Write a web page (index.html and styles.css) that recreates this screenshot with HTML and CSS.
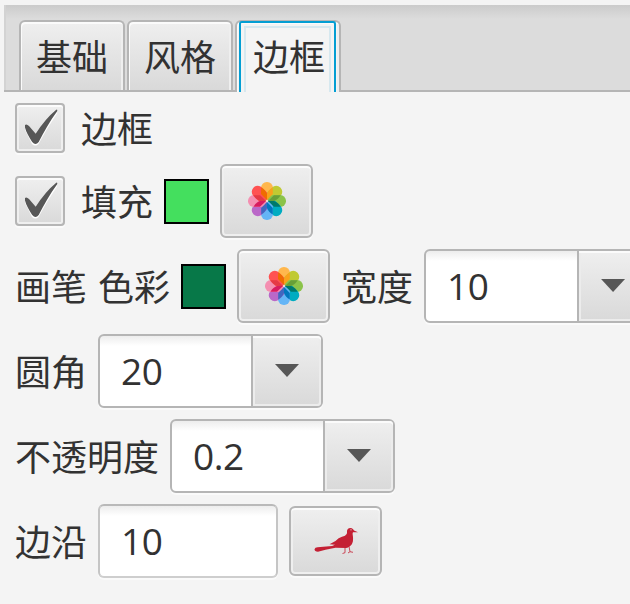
FILE: index.html
```
<!DOCTYPE html>
<html lang="zh-CN">
<head>
<meta charset="utf-8">
<title>边框</title>
<link rel="stylesheet" href="styles.css">
</head>
<body>
<svg class="defs" width="0" height="0">
  <symbol id="check" viewBox="0 0 50 50">
    <path d="M10 24 12.500 23.500 20.700 32.500 32 17 42 8.500V10.500L32 26 23.500 41Q20.500 44 17 41L10 27Z" fill="#fff"/>
    <path d="M10 22Q11.500 20.500 14 23L20.700 30.800Q30 16 41.500 6.500 43 6.500 42 8.500C35 18 29 29 23.700 39Q20.500 43 17.200 39C14 34 11 29 10 24.500Z" fill="#575757"/>
  </symbol>
  <symbol id="flower" viewBox="-20 -20 40 40">
    <g class="petals">
      <rect x="-6" y="-19" width="12" height="18.500" rx="5.800" fill="#ffb74d"/>
      <rect x="-6" y="-19" width="12" height="18.500" rx="5.800" fill="#c0ca33" transform="rotate(45)"/>
      <rect x="-6" y="-19" width="12" height="18.500" rx="5.800" fill="#8bc34a" transform="rotate(90)"/>
      <rect x="-6" y="-19" width="12" height="18.500" rx="5.800" fill="#00acc1" transform="rotate(135)"/>
      <rect x="-6" y="-19" width="12" height="18.500" rx="5.800" fill="#64b5f6" transform="rotate(180)"/>
      <rect x="-6" y="-19" width="12" height="18.500" rx="5.800" fill="#ba68c8" transform="rotate(225)"/>
      <rect x="-6" y="-19" width="12" height="18.500" rx="5.800" fill="#f48fb1" transform="rotate(270)"/>
      <rect x="-6" y="-19" width="12" height="18.500" rx="5.800" fill="#ff5252" transform="rotate(315)"/>
    </g>
    <path d="M0-1-6-7-5.800-13.500C-3-12-1-10 0-7Z" fill="#ef6c00"/>
    <path d="M0-1V-7C1-10 3-12 5.800-13.500V-7Z" fill="#f9a01b"/>
    <path d="M1 0 7-5.800H13.500C12-3 10-1 7 0Z" fill="#689f38"/>
    <path d="M1 0H7C10 1 12 3 13.500 5.800H7Z" fill="#00796b"/>
    <path d="M0 1 5.800 7V13.500C3 12 1 10 0 7Z" fill="#0277bd"/>
    <path d="M0 1V7C-1 10-3 12-5.800 13.500V7Z" fill="#3f68c0"/>
    <path d="M-1 0-7 5.800H-13.500C-12 3-10 1-7 0Z" fill="#d81b60"/>
    <path d="M-1 0H-7C-10-1-12-3-13.500-5.800H-7Z" fill="#e53945"/>
    <circle r="1.200" fill="#e8ddd8"/>
  </symbol>
</svg>

<nav class="tabs">
  <div class="tab">基础</div>
  <div class="tab">风格</div>
  <div class="tab active"><span class="focus">边框</span></div>
</nav>

<main class="form">
  <div class="row toggle">
    <div class="checkbox"><svg width="50" height="50"><use href="#check"/></svg></div>
    <span class="label">边框</span>
  </div>
  <div class="row">
    <div class="row toggle">
      <div class="checkbox"><svg width="50" height="50"><use href="#check"/></svg></div>
      <span class="label">填充</span>
    </div>
    <div class="swatch lime"></div>
    <div class="button"><svg width="40" height="40"><use href="#flower"/></svg></div>
  </div>
  <div class="row">
    <span class="label">画笔</span>
    <span class="label">色彩</span>
    <div class="swatch green"></div>
    <div class="button"><svg width="40" height="40"><use href="#flower"/></svg></div>
    <span class="label">宽度</span>
    <div class="combo"><span class="value">10</span><div class="arrow"><i></i></div></div>
  </div>
  <div class="row">
    <span class="label">圆角</span>
    <div class="combo"><span class="value">20</span><div class="arrow"><i></i></div></div>
  </div>
  <div class="row">
    <span class="label">不透明度</span>
    <div class="combo"><span class="value">0.2</span><div class="arrow"><i></i></div></div>
  </div>
  <div class="row">
    <span class="label">边沿</span>
    <div class="input"><span class="value">10</span></div>
    <div class="button short">
      <svg class="bird" width="46" height="30" viewBox="0 0 46 30">
        <path d="M1.500 23.300Q2 21.300 4.500 21.300L19 20 22 18.800 16.500 18.300 22.500 15Q25.500 11.500 29 10.700C31 10.500 34 9 34 6.500C33.500 4 35 2 37.500 2C39.500 2 40.500 3.500 41 4.500L45 6.300 40 6.300C39 8 40.500 10 40 14C40 18 37 21.500 33 22L22.500 21.700 12.500 23.700 5 25.700Q1.500 25.700 1.500 23.300Z" fill="#c42034"/>
        <path d="M32 21.500V26.700L29.500 27.500M36 20.500 37 25.700 35 27M37 25.700 40 26.300" fill="none" stroke="#c42034" stroke-width=".8"/>
        <circle cx="38" cy="3.800" r=".6" fill="#eee"/>
      </svg>
    </div>
  </div>
</main>
</body>
</html>
```

FILE: styles.css
```
* { box-sizing: border-box; }

body {
  margin: 0;
  height: 604px;
  padding: 5px 0 0 4px;
  overflow: hidden;
  background: #f4f4f4;
  color: #323232;
  font: 36px/50px "Noto Sans CJK SC", sans-serif;
}

svg { display: block; flex: none; }
.defs { position: absolute; }

.tabs {
  display: flex;
  gap: 2px;
  height: 87px;
  padding: 15px 0 0 15px;
  background: linear-gradient(#cbcbcb, #dcdcdc 14px);
  box-shadow: inset 0 -2px #b5b5b5, inset 2px 0 #d3d3d3;
}

.tab {
  width: 106px;
  height: 70px;
  padding: 8px 0 0 15px;
  border: 2px solid #b5b5b5;
  border-bottom: 0;
  border-radius: 6px 6px 0 0;
  background: linear-gradient(#efefef, #d9d9d9);
  box-shadow: inset 1px 2px #fbfbfb, inset -2px 0 #efefef;
  white-space: nowrap;
}

.tab.active {
  height: 72px;
  padding: 0 2px;
  background: #f4f4f4;
}

.focus {
  display: block;
  width: 97px;
  height: 71px;
  margin-top: -1px;
  padding: 7px 0 0 12px;
  border: 2px solid #039ed3;
  border-bottom: 0;
  border-radius: 3px 3px 0 0;
  background:
    linear-gradient(#d6e8ef, #d6e8ef) 3px 3px / 87px 2px no-repeat,
    linear-gradient(#d6e8ef, #d6e8ef) 3px 3px / 2px 100% no-repeat,
    linear-gradient(#d6e8ef, #d6e8ef) 88px 3px / 2px 100% no-repeat;
}

.form {
  display: flex;
  flex-direction: column;
  gap: 11px;
  padding: 11px 0 0 11px;
}

.row {
  display: flex;
  align-items: center;
  flex: none;
  gap: 11px;
}

.row.toggle { gap: 16px; }

.label {
  flex: none;
  position: relative;
  top: -1px;
  white-space: nowrap;
}

.checkbox, .button, .combo, .input {
  flex: none;
  border: 2px solid #b5b5b5;
  border-radius: 6px;
  box-shadow: 0 2px #fafafa;
}

.checkbox, .button {
  display: flex;
  align-items: center;
  justify-content: center;
  background: linear-gradient(#efefef, #d9d9d9);
  box-shadow: inset 0 2px #fcfcfc, inset 0 0 0 2px #efefef, 0 2px #fafafa;
}

.checkbox { width: 50px; height: 50px; border-radius: 4px; }
.button { width: 93px; height: 74px; padding: 0 0 1px; }
.button.short { height: 70px; }

.swatch {
  flex: none;
  width: 45px;
  height: 45px;
  border: 2px solid #000;
}

.lime { background: #44df5e; }
.green { background: #077848; }

.combo, .input {
  display: flex;
  height: 74px;
  background: linear-gradient(#ededed, #fff 10px);
}

.combo { width: 225px; }
.input { width: 180px; border-color: #b9b9b9 #c5c5c5 #cecece; }

.value {
  flex: 1;
  padding-left: 21px;
  font: 37px/70px "Open Sans", sans-serif;
  letter-spacing: -0.4px;
}

.arrow {
  display: flex;
  align-items: center;
  justify-content: center;
  width: 70px;
  border-left: 2px solid #b5b5b5;
  border-radius: 0 4px 4px 0;
  background: linear-gradient(#efefef, #d9d9d9);
  box-shadow: inset 0 2px #fbfbfb, inset 0 0 0 2px #ececec;
}

.arrow i {
  width: 24px;
  height: 13px;
  margin-top: -1px;
  background: #575757;
  clip-path: polygon(0 0, 100% 0, 50% 100%);
}
```
